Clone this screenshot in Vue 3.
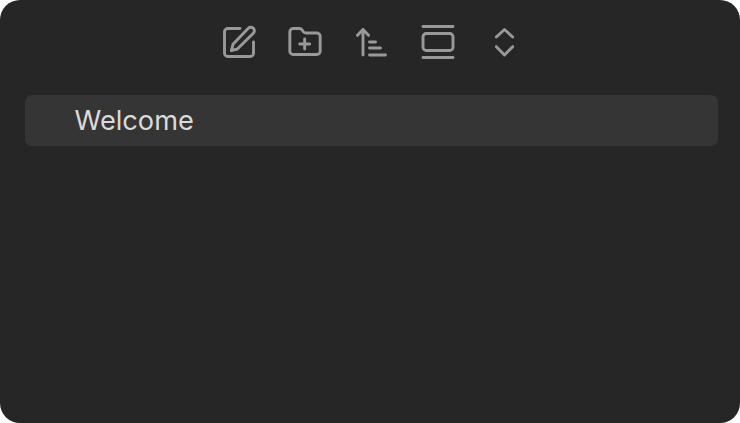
<script setup>
const item = 'Welcome'
</script>

<template>
  <div class="pane">
    <div class="nav-buttons">
      <div class="nav-btn">
        <svg viewBox="0 0 24 24">
          <path d="M12.6 3.9H5.3a2 2 0 0 0-2 2v12.8a2 2 0 0 0 2 2h13.4a2 2 0 0 0 2-2V12" />
          <path d="M17.6 3.8a2.1 2.1 0 0 1 3 3L11 16.2l-3.6 1 1-3.8z" />
        </svg>
      </div>
      <div class="nav-btn">
        <svg viewBox="0 0 24 24">
          <path d="M11.8 10.2v6M8.8 13.2h6" />
          <path d="M19.1 19.5a2 2 0 0 0 2-2V8.6a2 2 0 0 0-2-2h-6.5a2 2 0 0 1-1.7-.9l-.6-.9a2 2 0 0 0-1.7-.9H4.9a2 2 0 0 0-2 2v11.6a2 2 0 0 0 2 2z" />
        </svg>
      </div>
      <div class="nav-btn">
        <svg viewBox="0 0 24 24">
          <path d="M3.3 8 6.6 4.5 9.9 8M6.6 4.5v15.3" />
          <path d="M10.5 12h3.6M10.5 15.6h6.6M10.5 19.8h9.6" />
        </svg>
      </div>
      <div class="nav-btn">
        <svg viewBox="0 0 24 24">
          <path d="M3 2.7h18M3 21.3h18" />
          <rect x="3" y="6.9" width="18" height="10.2" rx="2" />
        </svg>
      </div>
      <div class="nav-btn">
        <svg viewBox="0 0 24 24">
          <path d="m6.8 9 4.9-4.5L16.6 9M6.8 14.8l4.9 5 4.9-5" />
        </svg>
      </div>
    </div>
    <div class="file-list">
      <div class="file-row">{{ item }}</div>
    </div>
  </div>
</template>

<style scoped>
.pane {
  width: 740px;
  height: 423px;
  box-sizing: border-box;
  background: #262626;
  border-radius: 20px;
  padding: 22px 22px 0 25px;
  font-family: Inter, "Liberation Sans", sans-serif;
}

.nav-buttons {
  display: flex;
  justify-content: center;
  gap: 26.5px;
  height: 40px;
}

.nav-btn {
  width: 40px;
  height: 40px;
}

.nav-btn svg {
  display: block;
  width: 40px;
  height: 40px;
  fill: none;
  stroke: #999999;
  stroke-width: 1.75;
  stroke-linecap: round;
  stroke-linejoin: round;
}

.file-list {
  margin-top: 33px;
}

.file-row {
  height: 51px;
  line-height: 51px;
  padding-left: 49.5px;
  border-radius: 7px;
  background: #353535;
  color: #dadada;
  font-size: 27.2px;
}
</style>

<style>
html,
body {
  margin: 0;
  background: #ffffff;
}
</style>
